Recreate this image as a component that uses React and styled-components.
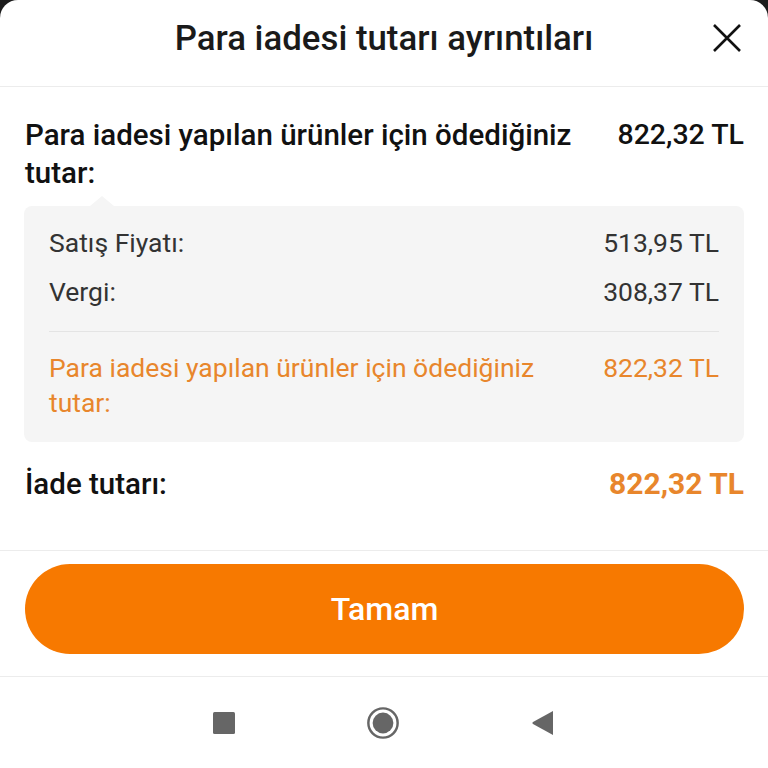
import styled, { createGlobalStyle } from "styled-components";

//* Global
const GlobalStyle = createGlobalStyle`
  html, body {
    margin: 0;
    padding: 0;
    background: #1c1c1c;
  }
  body {
    font-family: Roboto, "Noto Sans", "Liberation Sans", sans-serif;
    -webkit-font-smoothing: antialiased;
  }
`;

const ORANGE = "#f77900";
const ORANGE_TEXT = "#e8862c";

//* Sheet
const Sheet = styled.div`
  width: 768px;
  height: 768px;
  background: #fff;
  border-radius: 18px 18px 0 0;
  display: flex;
  flex-direction: column;
  overflow: hidden;
`;

const Header = styled.header`
  height: 87px;
  flex: none;
  border-bottom: 1px solid #ececec;
  display: grid;
  grid-template-columns: 80px 1fr 80px;
  align-items: center;
  box-sizing: border-box;
  padding-bottom: 10px;
`;

const Title = styled.h1`
  grid-column: 2;
  margin: 0;
  text-align: center;
  font-size: 34.8px;
  font-weight: 500;
  color: #1a1a1a;
`;

const CloseButton = styled.button`
  grid-column: 3;
  justify-self: end;
  margin-right: 24px;
  width: 34px;
  height: 34px;
  border: 0;
  padding: 0;
  background: none;
  display: flex;
  align-items: center;
  justify-content: center;
`;

const Body = styled.div`
  padding: 29px 24px 0 25px;
  height: 464px;
  flex: none;
  box-sizing: border-box;
  border-bottom: 1px solid #ececec;
`;

const Row = styled.div`
  display: flex;
  justify-content: space-between;
  align-items: flex-start;
  gap: 30px;
`;

const Label = styled.div`
  font-size: ${(p) => (p.$big ? "29.5px" : "26.5px")};
  font-weight: ${(p) => (p.$big ? 500 : 400)};
  line-height: ${(p) => (p.$big ? "38px" : "35px")};
  color: ${(p) => p.$color || "#111"};
  max-width: ${(p) => (p.$big ? "560px" : "500px")};
`;

const Amount = styled.div`
  font-size: ${(p) => p.$size || "28.5px"};
  font-weight: ${(p) => p.$weight || 500};
  line-height: ${(p) => p.$lh || "38px"};
  color: ${(p) => p.$color || "#111"};
  white-space: nowrap;
`;

const DetailBox = styled.div`
  position: relative;
  margin: 14px 0 0 -1px;
  background: #f5f5f5;
  border-radius: 8px;
  padding: 19px 25px 22px 25px;

  &::before {
    content: "";
    position: absolute;
    top: -10px;
    left: 66px;
    border-left: 12px solid transparent;
    border-right: 12px solid transparent;
    border-bottom: 10px solid #f5f5f5;
  }
`;

const DetailRow = styled(Row)`
  padding: ${(p) => p.$pad || "0"};
`;

const Divider = styled.div`
  height: 1px;
  background: #e4e4e4;
  margin: 22px 0 18px;
`;

const TotalRow = styled(Row)`
  align-items: center;
  margin-top: 23px;
`;

const Footer = styled.div`
  flex: none;
  padding: 13px 24px 22px 25px;
  border-bottom: 1px solid #ececec;
`;

const PrimaryButton = styled.button`
  width: 100%;
  height: 90px;
  border: 0;
  border-radius: 45px;
  background: ${ORANGE};
  color: #fff;
  font-family: inherit;
  font-size: 32px;
  font-weight: 500;
`;

const NavBar = styled.nav`
  flex: 1;
  display: flex;
  justify-content: center;
  align-items: center;
  gap: 130px;
`;

const NavIcon = styled.svg`
  display: block;
`;

function App() {
  return (
    <>
      <GlobalStyle />
      <Sheet>
        <Header>
          <Title>Para iadesi tutarı ayrıntıları</Title>
          <CloseButton aria-label="Kapat">
            <svg width="30" height="30" viewBox="0 0 30 30">
              <path d="M2 2 L28 28 M28 2 L2 28" stroke="#111" strokeWidth="2.6" />
            </svg>
          </CloseButton>
        </Header>

        <Body>
          <Row>
            <Label $big>Para iadesi yapılan ürünler için ödediğiniz tutar:</Label>
            <Amount>822,32 TL</Amount>
          </Row>

          <DetailBox>
            <DetailRow>
              <Label $color="#333">Satış Fiyatı:</Label>
              <Amount $size="26.5px" $weight={400} $lh="35px" $color="#333">513,95 TL</Amount>
            </DetailRow>
            <DetailRow $pad="14px 0 0">
              <Label $color="#333">Vergi:</Label>
              <Amount $size="26.5px" $weight={400} $lh="35px" $color="#333">308,37 TL</Amount>
            </DetailRow>
            <Divider />
            <DetailRow>
              <Label $color={ORANGE_TEXT}>Para iadesi yapılan ürünler için ödediğiniz tutar:</Label>
              <Amount $size="26.5px" $weight={400} $lh="35px" $color={ORANGE_TEXT}>822,32 TL</Amount>
            </DetailRow>
          </DetailBox>

          <TotalRow>
            <Label $big>İade tutarı:</Label>
            <Amount $size="30px" $weight={700} $color={ORANGE_TEXT}>822,32 TL</Amount>
          </TotalRow>
        </Body>

        <Footer>
          <PrimaryButton>Tamam</PrimaryButton>
        </Footer>

        <NavBar>
          <NavIcon width="24" height="24" viewBox="0 0 24 24">
            <rect x="1" y="1" width="22" height="22" rx="1.5" fill="#666" />
          </NavIcon>
          <NavIcon width="34" height="34" viewBox="0 0 36 36">
            <circle cx="18" cy="18" r="15.5" fill="none" stroke="#666" strokeWidth="2.6" />
            <circle cx="18" cy="18" r="11" fill="#666" />
          </NavIcon>
          <NavIcon width="26" height="26" viewBox="0 0 26 26">
            <path d="M23 1 L23 25 L3 14 Q1.5 13 3 12 Z" fill="#666" />
          </NavIcon>
        </NavBar>
      </Sheet>
    </>
  );
}

export default App;
